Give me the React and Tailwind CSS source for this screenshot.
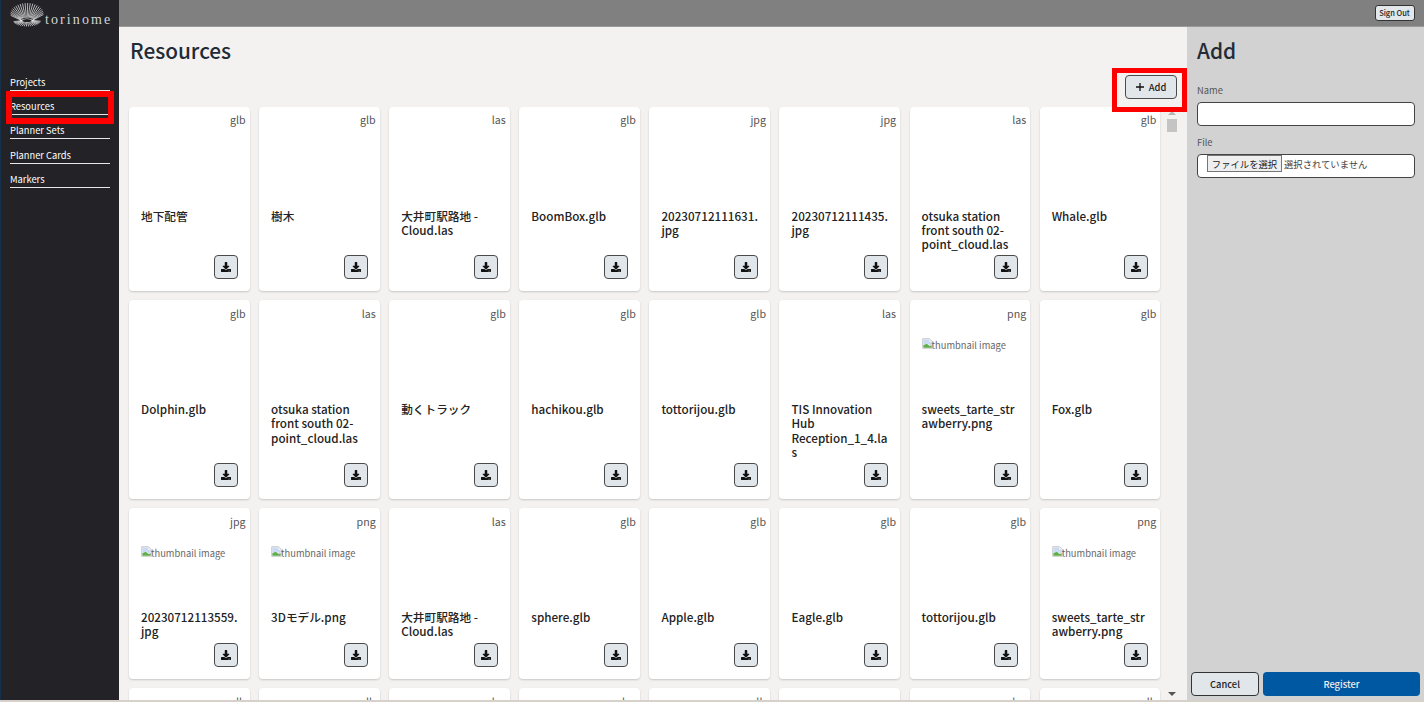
import React from "react";
import { FaDownload } from "react-icons/fa";

const FONT = "font-['Noto_Sans_CJK_JP','Noto_Sans',sans-serif]";

const rows = [
  [["glb", "地下配管"], ["glb", "樹木"], ["las", "大井町駅路地 - Cloud.las"], ["glb", "BoomBox.glb"], ["jpg", "20230712111631.jpg"], ["jpg", "20230712111435.jpg"], ["las", "otsuka station front south 02-point_cloud.las"], ["glb", "Whale.glb"]],
  [["glb", "Dolphin.glb"], ["las", "otsuka station front south 02-point_cloud.las"], ["glb", "動くトラック"], ["glb", "hachikou.glb"], ["glb", "tottorijou.glb"], ["las", "TIS Innovation Hub Reception_1_4.las"], ["png", "sweets_tarte_strawberry.png", true], ["glb", "Fox.glb"]],
  [["jpg", "20230712113559.jpg", true], ["png", "3Dモデル.png", true], ["las", "大井町駅路地 - Cloud.las"], ["glb", "sphere.glb"], ["glb", "Apple.glb"], ["glb", "Eagle.glb"], ["glb", "tottorijou.glb"], ["png", "sweets_tarte_strawberry.png", true]],
  [["glb", ""], ["glb", ""], ["las", ""], ["las", ""], ["glb", ""], ["png", ""], ["las", ""], ["glb", ""]],
];

const nav = ["Projects", "Resources", "Planner Sets", "Planner Cards", "Markers"];

function Logo() {
  const lines = [];
  const n = 40;
  for (let i = 0; i < n; i++) {
    const a = (i / n) * Math.PI * 2 + 0.04;
    const s = Math.sin(a);
    const c = Math.cos(a);
    const up = s < 0.15;
    lines.push(
      <line
        key={i}
        x1={17 + c * 6}
        y1={17 + s * 2.4}
        x2={17 + c * (up ? 16.5 : 14 )}
        y2={up ? 11 + s * 11 : 17 + s * 6.5}
        stroke="#e4e4e4"
        strokeWidth="0.75"
      />
    );
  }
  return (
    <svg width="34" height="24" viewBox="0 0 34 24" className="shrink-0">
      {lines}
      <path d="M10 17.5Q17 13.5 24 17.5Q17 21.5 10 17.5Z" fill="#f4f4f4" />
      <ellipse cx="17" cy="17.5" rx="4.6" ry="1.6" fill="#222227" />
    </svg>
  );
}

function Broken() {
  return (
    <svg width="11" height="11" viewBox="0 0 16 16" className="shrink-0">
      <path d="M1 1h10l4 4v10H1z" fill="#f4f4f4" stroke="#b5b5b5" />
      <path d="M2 2h8.5v3.5H14V9l-2.5 1.5L8 8l-6 2z" fill="#c9daf5" />
      <path d="M2 14v-3.5L7 8.5l4 3 3-1V14z" fill="#62ae4e" />
    </svg>
  );
}

function Card({ type, name, thumb }) {
  return (
    <div className="flex min-h-0 flex-col rounded-[4px] bg-white shadow-[0_1px_2px_rgba(0,0,0,0.18)]">
      <div className="h-[24px] pr-[4px] pt-[5.5px] text-right text-[10.67px] leading-[16px] text-[#555]">{type}</div>
      <div className="h-[78px] shrink-0 px-[12px] pt-[13.5px]">
        {thumb && (
          <div className="flex items-start text-[9.33px] leading-[14px] text-[#666]">
            <Broken />
            <span className="-ml-[1px] mt-[0.5px]">thumbnail image</span>
          </div>
        )}
      </div>
      <div className="pl-[12px] pr-[11px] text-[11.67px] font-medium leading-[14.2px] text-[#222] [overflow-wrap:anywhere]">{name}</div>
      {name && (
        <div className="mt-auto flex justify-end pb-[12px] pr-[12px]">
          <button className="flex h-[24px] w-[24px] items-center justify-center rounded-[4px] border border-[#4a4a4a] bg-[#e1e6eb] text-[#111]">
            <FaDownload size={10} />
          </button>
        </div>
      )}
    </div>
  );
}

export default function App() {
  return (
    <div className={`h-[702px] w-[1424px] overflow-hidden bg-[#d6d1ca] ${FONT}`}>
      <div className="relative flex h-[700px]">
        <aside className="flex w-[119px] shrink-0 flex-col border-l border-[#15304a] bg-[#222227]">
          <div className="flex h-[26px] items-start pl-[9px] pt-[3px]">
            <Logo />
            <span className="ml-[1px] mt-[9px] font-['Liberation_Serif',serif] text-[14px] leading-[16px] tracking-[2.1px] text-[#d4d4d4]">torinome</span>
          </div>
          <nav className="mt-[48.5px] flex flex-col gap-[8.4px] px-[9px]">
            {nav.map((n) => (
              <div key={n} className="h-[16px] border-b border-[#e6e6e6] text-[9.33px] leading-[14px] text-white">{n}</div>
            ))}
          </nav>
        </aside>

        <div className="flex min-w-0 flex-1 flex-col">
          <header className="flex h-[27px] shrink-0 items-start justify-end border-b border-[#9a9a9a] bg-[#808080] pr-[9.5px] pt-[5px]">
            <button className="flex h-[16px] w-[40px] items-center justify-center rounded-[3px] border border-[#333] bg-[#e2e7ec] pb-[1px] text-[7.5px] font-medium leading-none text-[#222]">Sign Out</button>
          </header>
          <div className="flex min-h-0 flex-1">
            <main className="flex w-[1068px] shrink-0 flex-col bg-[#f3f2f1]">
              <h1 className="pl-[11px] pt-[7.5px] text-[20.8px] font-medium leading-[30px] text-[#222b36]">Resources</h1>
              <div className="mt-[10.5px] flex justify-end pr-[10px]">
                <button className="flex h-[24px] w-[52px] items-center justify-center gap-[5px] rounded-[4px] border border-[#4a4a4a] bg-[#e1e6eb] text-[9.33px] font-medium text-[#222]">
                  <svg width="8" height="8" viewBox="0 0 8 8" className="shrink-0">
                    <path d="M4 0v8M0 4h8" stroke="#111" strokeWidth="1.3" />
                  </svg>
                  Add
                </button>
              </div>
              <div className="mt-[7.7px] flex min-h-0 flex-1">
                <div className="min-w-0 flex-1 overflow-hidden pl-[10px]">
                  <div className="grid w-[1031.3px] grid-cols-8 grid-rows-[184.6px_199px_171px_100px] gap-x-[9.5px] gap-y-[9px]">
                    {rows.flat().map((c, i) => (
                      <Card key={i} type={c[0]} name={c[1]} thumb={c[2]} />
                    ))}
                  </div>
                </div>
                <div className="flex w-[24px] shrink-0 flex-col items-center pr-[7px]">
                  <div className="mt-[4px] h-0 w-0 border-x-[4px] border-b-[4px] border-x-transparent border-b-[#b5b5b5]" />
                  <div className="mt-[4px] h-[13px] w-[10px] bg-[#c4c4c4]" />
                  <div className="mb-[4px] mt-auto h-0 w-0 border-x-[4px] border-t-[4px] border-x-transparent border-t-[#555]" />
                </div>
              </div>
            </main>

            <section className="flex flex-1 flex-col bg-[#d2d2d2] pb-[4px]">
              <h2 className="pl-[10px] pt-[7.5px] text-[20.8px] font-medium leading-[30px] text-[#222b36]">Add</h2>
              <div className="mt-[18.5px] flex flex-col pl-[10px] pr-[9px]">
                <label className="text-[9.33px] leading-[14px] text-[#555]">Name</label>
                <div className="mt-[5px] h-[24px] rounded-[4px] border border-[#444] bg-white" />
                <label className="mt-[9px] text-[9.33px] leading-[14px] text-[#555]">File</label>
                <div className="mt-[5px] flex h-[24px] items-center rounded-[4px] border border-[#444] bg-white pl-[9px] text-[9.33px] text-[#444]">
                  <span className="-mt-[5px] flex h-[17px] w-[75px] items-center justify-center border border-[#767676] bg-[#efefef] text-[#222]">ファイルを選択</span>
                  <span className="-mt-[5px] ml-[2px]">選択されていません</span>
                </div>
              </div>
              <div className="mt-auto flex gap-[4px] px-[4px]">
                <button className="h-[24px] w-[68px] rounded-[4px] border border-[#333] bg-[#e1e6eb] text-[9.33px] font-medium text-[#222]">Cancel</button>
                <button className="h-[24px] flex-1 rounded-[4px] bg-[#0058a3] text-[9.33px] font-medium text-[#eee]">Register</button>
              </div>
            </section>
          </div>
        </div>

        <div className="absolute left-[6px] top-[91px] h-[33px] w-[108px] border-[6px] border-[#ff0000]" />
        <div className="absolute left-[1112px] top-[68px] h-[44px] w-[75px] border-[5px] border-[#ff0000]" />
      </div>
    </div>
  );
}
